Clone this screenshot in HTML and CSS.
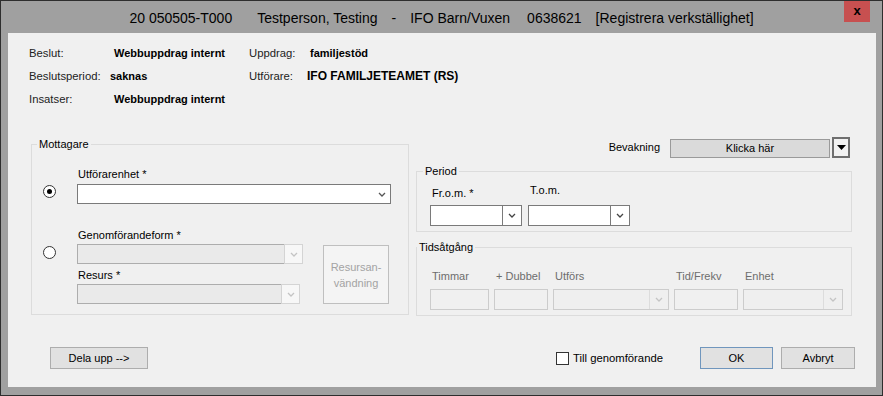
FILE: index.html
```html
<!DOCTYPE html>
<html lang="sv">
<head>
    <meta charset="UTF-8">
    <title>Registrera verkställighet</title>
    <link rel="stylesheet" href="styles.css">
</head>
<body>
    <div class="window">
        <div class="titlebar">
            <div></div>
            <div class="title">
                <span>20 050505-T000</span>
                <span class="t-wide">Testperson, Testing</span>
                <span class="t-mid">-</span>
                <span class="t-mid">IFO Barn/Vuxen</span>
                <span class="t-mid2">0638621</span>
                <span class="t-mid">[Registrera verkställighet]</span>
            </div>
            <div class="close">x</div>
        </div>
        <div class="client">
            <div class="info">
                <span>Beslut:</span>
                <b>Webbuppdrag internt</b>
                <span>Uppdrag:</span>
                <b>familjestöd</b>
                <span>Beslutsperiod:</span>
                <b class="shift">saknas</b>
                <span>Utförare:</span>
                <b class="big">IFO FAMILJETEAMET (RS)</b>
                <span>Insatser:</span>
                <b>Webbuppdrag internt</b>
            </div>

            <div class="main">
                <fieldset class="group mottagare">
                    <legend>Mottagare</legend>
                    <div class="opt opt-one">
                        <span class="radio checked"></span>
                        <div class="fields">
                            <label>Utförarenhet *</label>
                            <div class="combo plain wide">
                                <div class="combo-field"></div>
                                <svg class="chev" width="8" height="5" viewBox="0 0 8 5"><path d="M1 1l3 3 3-3" fill="none" stroke="#555" stroke-width="1.3"/></svg>
                            </div>
                        </div>
                    </div>
                    <div class="opt opt-two">
                        <span class="radio"></span>
                        <div class="fields narrow">
                            <label>Genomförandeform *</label>
                            <div class="combo off w-gen">
                                <div class="combo-field"></div>
                                <div class="combo-btn"><svg width="8" height="5" viewBox="0 0 8 5"><path d="M1 1l3 3 3-3" fill="none" stroke="#c4c4c4" stroke-width="1.3"/></svg></div>
                            </div>
                            <label class="resurs">Resurs *</label>
                            <div class="combo off w-res">
                                <div class="combo-field"></div>
                                <div class="combo-btn"><svg width="8" height="5" viewBox="0 0 8 5"><path d="M1 1l3 3 3-3" fill="none" stroke="#c4c4c4" stroke-width="1.3"/></svg></div>
                            </div>
                        </div>
                        <button class="btn-res" disabled>Resursan-<br>vändning</button>
                    </div>
                </fieldset>

                <div class="right">
                    <div class="bevakning">
                        <span>Bevakning</span>
                        <div class="klicka">Klicka här</div>
                        <div class="drop">
                            <svg width="9" height="5" viewBox="0 0 9 5"><path d="M0 0h9L4.5 5z" fill="#000"/></svg>
                        </div>
                    </div>

                    <fieldset class="group period">
                        <legend>Period</legend>
                        <div class="dates">
                            <div class="col">
                                <label class="from">Fr.o.m. *</label>
                                <div class="combo date w-from">
                                    <div class="combo-field"></div>
                                    <div class="combo-btn"><svg width="8" height="5" viewBox="0 0 8 5"><path d="M1 1l3 3 3-3" fill="none" stroke="#444" stroke-width="1.3"/></svg></div>
                                </div>
                            </div>
                            <div class="col">
                                <label class="tom">T.o.m.</label>
                                <div class="combo date w-tom">
                                    <div class="combo-field"></div>
                                    <div class="combo-btn"><svg width="8" height="5" viewBox="0 0 8 5"><path d="M1 1l3 3 3-3" fill="none" stroke="#444" stroke-width="1.3"/></svg></div>
                                </div>
                            </div>
                        </div>
                    </fieldset>

                    <fieldset class="group tid">
                        <legend>Tidsåtgång</legend>
                        <div class="tid-row">
                            <div class="col">
                                <label>Timmar</label>
                                <div class="box w-tim"></div>
                            </div>
                            <div class="col">
                                <label>+ Dubbel</label>
                                <div class="box w-dub"></div>
                            </div>
                            <div class="col">
                                <label>Utförs</label>
                                <div class="combo off2 w-utf">
                                    <div class="combo-field"></div>
                                    <div class="combo-btn"><svg width="8" height="5" viewBox="0 0 8 5"><path d="M1 1l3 3 3-3" fill="none" stroke="#c4c4c4" stroke-width="1.3"/></svg></div>
                                </div>
                            </div>
                            <div class="col">
                                <label>Tid/Frekv</label>
                                <div class="box w-frq"></div>
                            </div>
                            <div class="col">
                                <label>Enhet</label>
                                <div class="combo off2 w-enh">
                                    <div class="combo-field"></div>
                                    <div class="combo-btn"><svg width="8" height="5" viewBox="0 0 8 5"><path d="M1 1l3 3 3-3" fill="none" stroke="#c4c4c4" stroke-width="1.3"/></svg></div>
                                </div>
                            </div>
                        </div>
                    </fieldset>
                </div>
            </div>

            <div class="footer">
                <button class="btn dela">Dela upp --&gt;</button>
                <div class="footer-right">
                    <span class="check"></span>
                    <span class="check-label">Till genomförande</span>
                    <button class="btn ok">OK</button>
                    <button class="btn avbryt">Avbryt</button>
                </div>
            </div>
        </div>
    </div>
</body>
</html>
```

FILE: styles.css
```css
* {
    padding: 0;
    margin: 0;
    box-sizing: border-box;
}
body {
    font-family: "Liberation Sans", Arial, sans-serif;
    font-size: 11px;
    color: #000;
    background: #a0a0a0;
}
.window {
    width: 883px;
    height: 396px;
    display: flex;
    flex-direction: column;
    border: 1px solid #2e2e2e;
    background-color: #a0a0a0;
    padding: 0 6px 8px 7px;
}
.titlebar {
    height: 32px;
    margin: 0 -6px 0 -7px;
    display: grid;
    grid-template-columns: 1fr auto 1fr;
}
.title {
    display: flex;
    align-items: center;
    font-size: 14px;
    white-space: nowrap;
    padding-top: 1px;
}
.title .t-wide {
    margin-left: 25px;
}
.title .t-mid {
    margin-left: 14px;
}
.title .t-mid2 {
    margin-left: 17px;
}
.close {
    justify-self: end;
    width: 26px;
    height: 21px;
    margin-right: 12px;
    background-color: #c75050;
    font-weight: bold;
    font-size: 13px;
    text-align: center;
    line-height: 19px;
}
.client {
    flex: 1;
    background-color: #f0f0f0;
    padding-top: 8px;
    display: flex;
    flex-direction: column;
}

/* top info */
.info {
    margin-left: 21px;
    display: grid;
    grid-template-columns: 85px 135px 61px auto;
    grid-auto-rows: 23px;
    align-items: center;
    color: #222;
    font-size: 11.3px;
}
.info b {
    font-size: 11px;
    color: #000;
}
.info b.shift {
    margin-left: -4px;
}
.info b.big {
    font-size: 12px;
    margin-left: -3px;
}

/* group boxes */
.main {
    display: flex;
    align-items: flex-start;
    margin-top: 26px;
}
.group {
    border: 1px solid #dcdcdc;
    padding: 0;
}
.group legend {
    line-height: 16px;
    padding: 0 2px;
    margin-left: 5px;
}
.mottagare {
    margin-left: 23px;
    width: 378px;
    padding-bottom: 10px;
}
.mottagare legend {
    margin-top: -2px;
}
.opt {
    display: flex;
    align-items: flex-start;
}
.opt-one {
    padding-top: 14px;
}
.opt-two {
    padding-top: 23px;
}
.radio {
    width: 13px;
    height: 13px;
    border: 1px solid #333;
    border-radius: 50%;
    background-color: #fff;
    margin-left: 11px;
    margin-right: 21px;
    display: flex;
    align-items: center;
    justify-content: center;
}
.opt-one .radio {
    margin-top: 19px;
}
.opt-two .radio {
    margin-top: 19px;
}
.radio.checked::after {
    content: "";
    width: 5px;
    height: 5px;
    border-radius: 50%;
    background-color: #000;
}
.fields {
    display: flex;
    flex-direction: column;
}
.fields label {
    line-height: 16px;
    margin-bottom: 2px;
    padding-left: 1px;
}
.fields.narrow label {
    margin-bottom: 1px;
}
.fields label.resurs {
    margin-top: 3px;
}

.combo {
    display: flex;
    height: 20px;
    border: 1px solid #7a7a7a;
    background-color: #fff;
}
.combo-field {
    flex: 1;
}
.combo-btn {
    width: 19px;
    border-left: 1px solid #7a7a7a;
    display: flex;
    align-items: center;
    justify-content: center;
}
.combo.plain {
    align-items: center;
}
.combo.plain .chev {
    margin-right: 4px;
}
.combo.wide {
    width: 314px;
}
.combo.off {
    border-color: #adadad;
    background-color: #eaeaea;
}
.combo.off .combo-btn {
    background-color: #f7f7f7;
    width: 19px;
    margin: -1px -1px -1px 0;
    border: 1px solid #d4d4d4;
}
.w-gen {
    width: 226px;
}
.w-res {
    width: 223px;
}
.btn-res {
    width: 66px;
    height: 59px;
    margin-left: 20px;
    margin-top: 18px;
    border: 1px solid #bfbfbf;
    background-color: #f4f4f4;
    color: #a3a3a3;
    font-family: "Liberation Sans", Arial, sans-serif;
    font-size: 11px;
    line-height: 16px;
}

/* right side */
.right {
    width: 436px;
    margin-left: 7px;
    padding-top: 1px;
    display: flex;
    flex-direction: column;
}
.bevakning {
    display: flex;
    align-items: center;
    justify-content: flex-end;
    margin-right: 2px;
    height: 21px;
}
.bevakning span {
    margin-right: 10px;
    margin-top: -2px;
}
.klicka {
    width: 160px;
    height: 19px;
    background-color: #dadada;
    border: 1px solid #9a9a9a;
    text-align: center;
    line-height: 16px;
    margin-top: 1px;
}
.drop {
    width: 18px;
    height: 21px;
    margin-left: 2px;
    border: 2px solid #6f6f6f;
    background-color: #f2f2f2;
    display: flex;
    align-items: center;
    justify-content: center;
}
.period {
    margin-top: 5px;
    padding: 0 0 5px 13px;
}
.period legend {
    margin-left: -7px;
}
.dates {
    display: flex;
    gap: 6px;
}
.col {
    display: flex;
    flex-direction: column;
}
.dates label {
    line-height: 16px;
    padding-left: 2px;
}
.dates label.from {
    padding-top: 6px;
    margin-bottom: 4px;
}
.dates label.tom {
    padding-top: 3px;
    margin-bottom: 7px;
}
.combo.date {
    height: 21px;
}
.w-from {
    width: 92px;
}
.w-tom {
    width: 102px;
}
.tid {
    margin-top: 7px;
    padding: 13px 0 5px 13px;
}
.tid legend {
    margin-left: -13px;
}
.tid-row {
    display: flex;
    gap: 5px;
}
.tid-row label {
    line-height: 16px;
    padding-left: 2px;
    margin-bottom: 5px;
    color: #6d6d6d;
}
.box {
    height: 21px;
    border: 1px solid #cccccc;
    background-color: #f0f0f0;
}
.combo.off2 {
    height: 21px;
    border-color: #cccccc;
    background-color: #efefef;
}
.combo.off2 .combo-btn {
    border-left-color: #dcdcdc;
}
.w-tim {
    width: 59px;
}
.w-dub {
    width: 54px;
}
.w-utf {
    width: 116px;
}
.w-frq {
    width: 64px;
}
.w-enh {
    width: 100px;
}

/* footer */
.footer {
    display: flex;
    align-items: center;
    justify-content: space-between;
    margin-top: 30px;
    padding: 0 21px 0 42px;
}
.btn {
    height: 22px;
    border: 1px solid #adadad;
    background-color: #e1e1e1;
    font-family: "Liberation Sans", Arial, sans-serif;
    font-size: 11px;
    color: #000;
}
.dela {
    width: 98px;
}
.footer-right {
    display: flex;
    align-items: center;
    margin-top: 1px;
}
.check {
    width: 13px;
    height: 13px;
    border: 1px solid #333;
    background-color: #fff;
    margin-right: 4px;
}
.check-label {
    font-size: 11.3px;
    margin-right: 37px;
}
.ok {
    width: 73px;
    border-color: #7096bd;
}
.avbryt {
    width: 74px;
    margin-left: 8px;
}
```
